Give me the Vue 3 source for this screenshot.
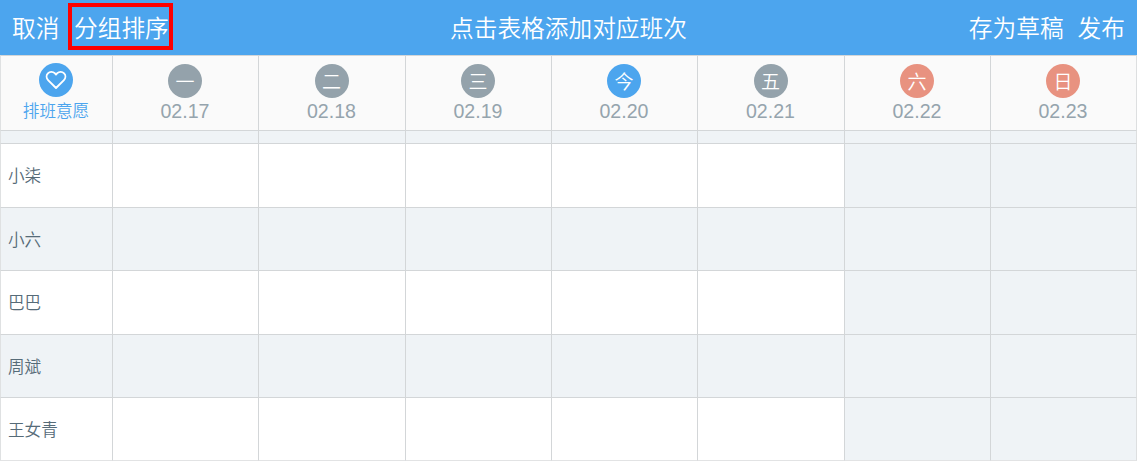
<template>
  <div class="schedule">
    <header class="navbar">
      <div class="nav-left">
        <button class="nav-button">取消</button>
        <button class="nav-button marked">分组排序</button>
      </div>
      <div class="nav-title">点击表格添加对应班次</div>
      <div class="nav-right">
        <button class="nav-button">存为草稿</button>
        <button class="nav-button">发布</button>
      </div>
    </header>

    <div class="table">
      <div class="cell head wish">
        <span class="circle today">
          <svg class="heart" viewBox="0 0 22 20">
            <path d="M11 18 L3.3 10.4 C1.2 8.2 1.1 5.1 2.9 3.3 C4.8 1.4 7.9 1.4 9.7 3.2 L11 4.5 L12.3 3.2 C14.1 1.4 17.2 1.4 19.1 3.3 C20.9 5.1 20.8 8.2 18.7 10.4 Z" />
          </svg>
        </span>
        <span class="wish-text">排班意愿</span>
      </div>
      <div v-for="day in days" :key="day.date" class="cell head">
        <span class="circle" :class="day.type">{{ day.name }}</span>
        <span class="date">{{ day.date }}</span>
      </div>

      <template v-for="(person, index) in people" :key="index">
        <div class="cell name" :class="{ shaded: index % 2 === 0 }">{{ person }}</div>
        <div
          v-for="day in days"
          :key="day.date"
          class="cell"
          :class="{ shaded: index % 2 === 0 || day.type === 'weekend' }"
        ></div>
      </template>
    </div>
  </div>
</template>

<script setup>
import { ref } from 'vue';

const days = ref([
  { name: '一', date: '02.17', type: 'workday' },
  { name: '二', date: '02.18', type: 'workday' },
  { name: '三', date: '02.19', type: 'workday' },
  { name: '今', date: '02.20', type: 'today' },
  { name: '五', date: '02.21', type: 'workday' },
  { name: '六', date: '02.22', type: 'weekend' },
  { name: '日', date: '02.23', type: 'weekend' }
]);

// the first row is mostly scrolled under the header
const people = ref(['', '小柒', '小六', '巴巴', '周斌', '王女青']);
</script>

<style>
body {
  background: #fff;
  overflow: hidden;
}
</style>

<style scoped>
.schedule {
  width: 1137px;
  height: 461px;
  overflow: hidden;
  font-family: "Liberation Sans", "Noto Sans CJK SC", sans-serif;
}

.navbar {
  display: grid;
  grid-template-columns: 1fr auto 1fr;
  align-items: center;
  box-sizing: border-box;
  height: 55px;
  padding: 0 12px 2px;
  background: #4ca5ee;
  color: #fff;
  font-family: "Noto Sans CJK SC", sans-serif;
  font-size: 23.7px;
  font-weight: 350;
}

.nav-left,
.nav-right {
  display: flex;
  align-items: center;
}

.nav-left {
  gap: 9px;
}

.nav-right {
  justify-content: flex-end;
  gap: 14px;
}

.nav-title,
.nav-button {
  padding: 2px 0 0;
  line-height: 37px;
  white-space: nowrap;
}

.nav-button {
  border: none;
  background: none;
  color: inherit;
  font-family: inherit;
  font-size: inherit;
  font-weight: inherit;
  cursor: pointer;
}

.marked {
  box-sizing: border-box;
  width: 105px;
  height: 47px;
  padding-left: 1px;
  border: 4px solid #fe0000;
}

.table {
  display: grid;
  grid-template-columns: 112px 146px 147px 146px 146px 147px 146px 147px;
  grid-template-rows: 75px 13px 64px 63px 64px 63px 64px;
}

.cell {
  box-sizing: border-box;
  min-width: 0;
  border-top: 1px solid #d3d6d8;
  border-left: 1px solid #d3d6d8;
  background: #fff;
}

.cell:nth-child(8n) {
  border-right: 1px solid #dddfe0;
}

.cell:nth-child(8n + 1) {
  border-left-color: #dfe1e2;
}

.cell:nth-last-child(-n + 8) {
  border-bottom: 1px solid #e2e3e4;
}

.shaded {
  background: #eff3f6;
}

.head {
  display: flex;
  flex-direction: column;
  align-items: center;
  padding: 8px 1px 0 0;
  background: #fafafa;
}

.circle {
  display: flex;
  align-items: center;
  justify-content: center;
  width: 34px;
  height: 34px;
  border-radius: 50%;
  color: #fff;
  font-family: "Noto Sans CJK SC", sans-serif;
  font-size: 19px;
  font-weight: 350;
  line-height: 34px;
}

.workday {
  background: #94a2ab;
}

.today {
  background: #4ca5ee;
}

.weekend.circle {
  background: #e89280;
}

.date {
  margin-top: 1px;
  color: #95a4ad;
  font-size: 19.6px;
  line-height: 24px;
}

.wish {
  padding-top: 7px;
}

.heart {
  width: 22px;
  height: 20px;
  fill: none;
  stroke: #fff;
  stroke-width: 1.9;
  stroke-linejoin: round;
}

.wish-text {
  margin-top: 2px;
  color: #4ca5ee;
  font-family: "Noto Sans CJK SC", sans-serif;
  font-size: 16.6px;
  font-weight: 350;
  line-height: 23px;
}

.name {
  display: flex;
  align-items: center;
  padding: 0 0 1px 7px;
  color: #566b78;
  font-family: "Noto Sans CJK SC", sans-serif;
  font-size: 16.6px;
  font-weight: 350;
}
</style>
